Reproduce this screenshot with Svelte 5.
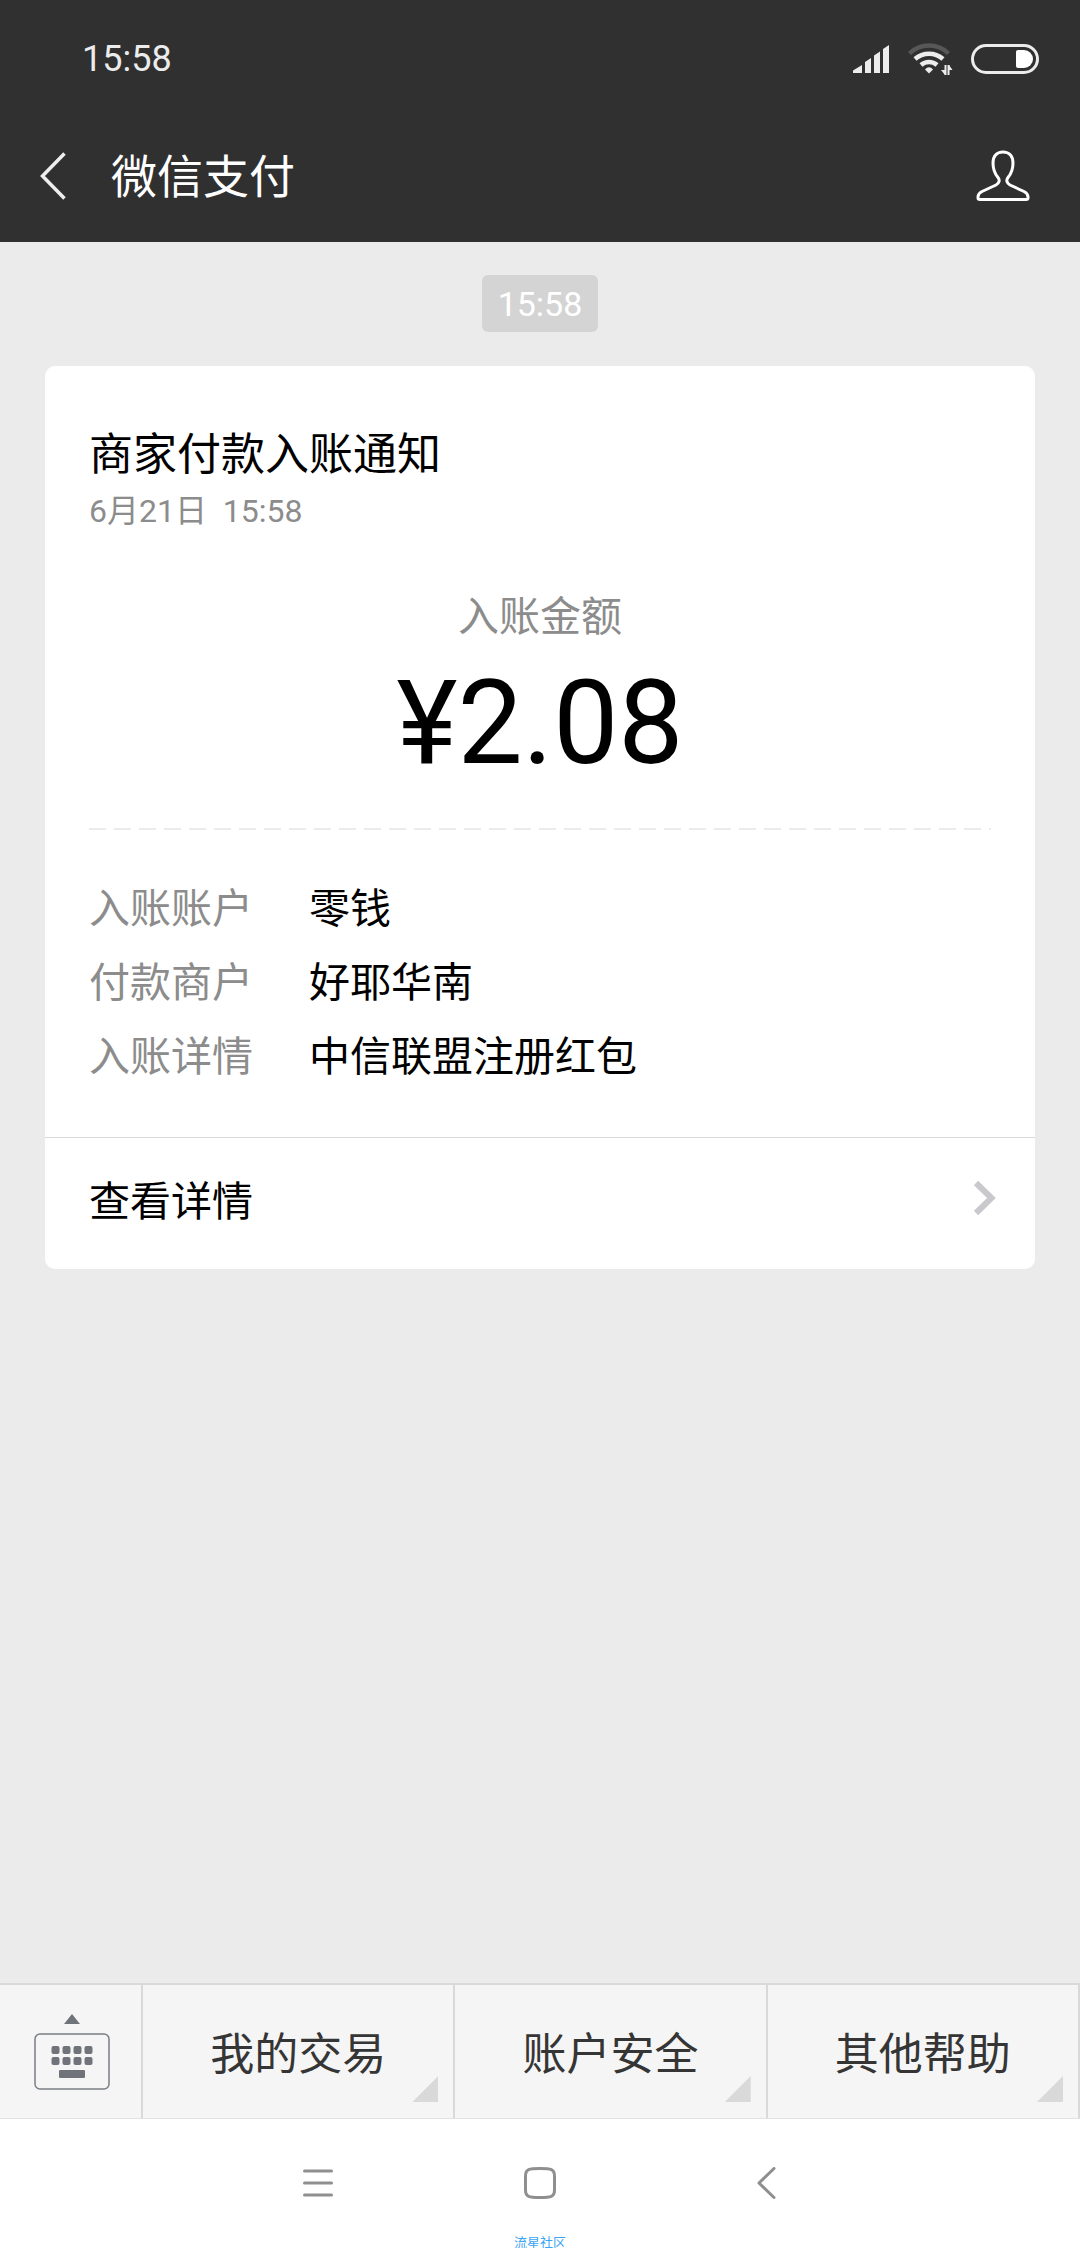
<script>
  const rows = [
    { label: '入账账户', value: '零钱' },
    { label: '付款商户', value: '好耶华南' },
    { label: '入账详情', value: '中信联盟注册红包' }
  ];
  const menus = ['我的交易', '账户安全', '其他帮助'];
  const keyColumns = [0, 11, 22, 33];
  const keyRows = [0, 11];
</script>

<div class="screen">
  <header class="top">
    <div class="status">
      <span class="clock num">15:58</span>
      <div class="indicators">
        <svg width="36" height="28" viewBox="0 0 36 28" fill="#ececec" aria-hidden="true">
          <path d="M0 28V25.500L9 20V28Z" />
          <path d="M12 28V17L18 13V28Z" />
          <path d="M21 28V10.500L27 6.500V28Z" />
          <path d="M30 28V4L36 0V28Z" />
        </svg>
        <svg class="wifi" width="44" height="32" viewBox="0 0 44 32" fill="none" stroke-width="4.500" aria-hidden="true">
          <path d="M1.500 10.500A28 28 0 0 1 40.500 10.500" stroke="#575757" />
          <path d="M7 16A21 21 0 0 1 35 16" stroke="#ececec" />
          <path d="M13 22A12 12 0 0 1 29 22" stroke="#ececec" />
          <path d="M21 30.500L17 26.500Q21 22 25 26.500Z" fill="#ececec" />
          <path d="M37.500 22V32M40.500 22V32" stroke="#ececec" stroke-width="2" />
          <path d="M33 27H37V32ZM44.500 27H41V22Z" fill="#ececec" />
        </svg>
        <svg width="68" height="30" viewBox="0 0 68 30" aria-hidden="true">
          <rect x="1.500" y="1.500" width="65" height="27" rx="13.500" fill="none" stroke="#ececec" stroke-width="3" />
          <path d="M47 6H53A9 9 0 0 1 53 24H47Q45 24 45 22V8Q45 6 47 6Z" fill="#fff" />
        </svg>
      </div>
    </div>
    <div class="titlebar">
      <button class="icon back" aria-label="返回">
        <svg width="27" height="48" viewBox="0 0 27 48" fill="none" stroke="#eee" stroke-width="3.500">
          <path d="M24.500 1.500L2.500 24L24.500 46.500" />
        </svg>
      </button>
      <h1>微信支付</h1>
      <button class="icon profile" aria-label="资料">
        <svg width="54" height="52" viewBox="0 0 54 52" fill="none" stroke="#fff" stroke-width="3" stroke-linejoin="round">
          <path d="M27 2C20.500 2 17 6.500 17 13C17 20 19 24 22 27.500C24 30 23.500 33 20 35L6 41.500C3 43 2 44.500 2 47V48Q2 49.500 4 49.500H50Q52 49.500 52 48V47C52 44.500 51 43 48 41.500L34 35C30.500 33 30 30 32 27.500C35 24 37 20 37 13C37 6.500 33.500 2 27 2Z" />
        </svg>
      </button>
    </div>
  </header>

  <main>
    <time class="chip num">15:58</time>
    <article class="card">
      <div class="body">
        <h2>商家付款入账通知</h2>
        <p class="date num">6月21日  15:58</p>
        <p class="caption">入账金额</p>
        <p class="amount num">¥2.08</p>
        <svg class="dashes" height="2" aria-hidden="true">
          <line x1="0" y1="1" x2="100%" y2="1" />
        </svg>
        <dl>
          {#each rows as row}
            <div class="row">
              <dt>{row.label}</dt>
              <dd>{row.value}</dd>
            </div>
          {/each}
        </dl>
      </div>
      <a class="more" href="#detail">
        <span>查看详情</span>
        <svg width="24" height="36" viewBox="0 0 24 36" fill="none" stroke="#c8c8cd" stroke-width="6" aria-hidden="true">
          <path d="M3 3L18.500 18L3 33" />
        </svg>
      </a>
    </article>
  </main>

  <footer>
    <div class="menubar">
      <button class="keyboard" aria-label="切换键盘">
        <svg width="76" height="78" viewBox="0 0 76 78" aria-hidden="true">
          <path d="M38 1L46 11H30Z" fill="#70747a" />
          <rect x="1" y="21" width="74" height="55" rx="5" fill="none" stroke="#7a7e83" stroke-width="1.500" />
          {#each keyRows as y}
            {#each keyColumns as x}
              <rect x={x + 17.5} y={y + 33} width="8" height="8" rx="2" fill="#70747a" />
            {/each}
          {/each}
          <rect x="25" y="57" width="26" height="8" rx="1" fill="#70747a" />
        </svg>
      </button>
      {#each menus as menu}
        <button class="menu">{menu}</button>
      {/each}
    </div>
    <nav>
      <button class="icon" aria-label="最近任务">
        <svg width="32" height="32" viewBox="0 0 32 32" stroke="#8f8f8f" stroke-width="3" stroke-linecap="round">
          <path d="M2.500 4H29.500M2.500 16H29.500M2.500 28H29.500" />
        </svg>
      </button>
      <button class="icon" aria-label="主屏幕">
        <svg width="32" height="32" viewBox="0 0 32 32" fill="none" stroke="#8f8f8f" stroke-width="3">
          <path d="M16 1.500C27 1.500 30.500 2 30.500 9V23C30.500 30 27 30.500 16 30.500C5 30.500 1.500 30 1.500 23V9C1.500 2 5 1.500 16 1.500Z" />
        </svg>
      </button>
      <button class="icon" aria-label="返回上级">
        <svg width="32" height="32" viewBox="0 0 32 32" fill="none" stroke="#8f8f8f" stroke-width="3" stroke-linecap="round" stroke-linejoin="round">
          <path d="M28 1.500L13 16L28 30.500" />
        </svg>
      </button>
    </nav>
    <p class="mark">流星社区</p>
  </footer>
</div>

<style>
  :global(body) {
    background: #ebebeb;
  }
  .screen {
    display: flex;
    flex-direction: column;
    min-height: 100vh;
    background: #ebebeb;
    color: #000;
    font-family: 'Noto Sans CJK SC', sans-serif;
    font-weight: 400;
  }
  .num {
    font-family: Roboto, 'Noto Sans CJK SC', sans-serif;
  }
  h1,
  h2,
  p,
  dl,
  dd {
    margin: 0;
    font-weight: inherit;
  }
  button {
    margin: 0;
    padding: 0;
    border: 0;
    background: none;
    color: inherit;
    font: inherit;
  }
  svg {
    display: block;
  }
  .top {
    background: #303030;
    color: #fff;
  }
  .status {
    display: flex;
    justify-content: space-between;
    align-items: center;
    height: 112px;
    padding: 5px 41px 0 82px;
    box-sizing: border-box;
  }
  .clock {
    color: #ececec;
    font-size: 36px;
  }
  .indicators {
    display: flex;
    align-items: center;
    gap: 19px;
  }
  .wifi {
    overflow: visible;
  }
  .titlebar {
    display: flex;
    align-items: center;
    height: 130px;
    padding: 0 50px 2px 40px;
    box-sizing: border-box;
  }
  h1 {
    flex: 1;
    padding: 0 0 6px 44px;
    font-size: 46px;
    line-height: 64px;
  }
  main {
    flex: 1;
    display: flex;
    flex-direction: column;
    align-items: center;
    padding: 33px 45px;
  }
  .chip {
    padding: 2px 16px 0;
    border-radius: 6px;
    background: #d4d4d4;
    color: #fff;
    font-size: 34px;
    line-height: 55px;
  }
  .card {
    align-self: stretch;
    margin-top: 34px;
    border-radius: 10px;
    background: #fff;
  }
  .body {
    padding: 53px 44px 47px;
  }
  h2 {
    font-size: 44px;
    line-height: 64px;
  }
  .date {
    color: #8c8c8c;
    font-size: 32px;
    line-height: 56px;
    white-space: pre;
  }
  .caption {
    margin-top: 44px;
    color: #8c8c8c;
    font-size: 41px;
    line-height: 60px;
    text-align: center;
  }
  .amount {
    margin-top: 12px;
    font-size: 116px;
    line-height: 136px;
    text-align: center;
  }
  .dashes {
    width: 100%;
    margin: 37px 0 38px;
  }
  .dashes line {
    stroke: #ebebeb;
    stroke-width: 2;
    stroke-dasharray: 17 8;
  }
  .row {
    display: flex;
    gap: 56px;
    font-size: 41px;
    line-height: 74px;
  }
  dt {
    color: #8c8c8c;
  }
  .more {
    display: flex;
    justify-content: space-between;
    align-items: center;
    height: 132px;
    padding: 0 38px 12px 44px;
    box-sizing: border-box;
    border-top: 1px solid #d9d9d9;
    color: inherit;
    font-size: 41px;
    text-decoration: none;
  }
  footer {
    background: #fff;
  }
  .menubar {
    display: flex;
    height: 136px;
    box-sizing: border-box;
    border-top: 2px solid #d9d9d9;
    border-bottom: 1px solid #e2e2e2;
    background: #f5f5f5;
    color: #353535;
  }
  .menubar button {
    border-right: 2px solid #d9d9d9;
  }
  .keyboard {
    display: grid;
    place-items: center;
    width: 143px;
    padding-left: 2px;
  }
  .menu {
    position: relative;
    flex: 1;
    padding-bottom: 2px;
    font-size: 44px;
  }
  .menu::after {
    content: '';
    position: absolute;
    right: 15px;
    bottom: 16px;
    width: 26px;
    height: 26px;
    background: #d9d9d9;
    clip-path: polygon(100% 0, 100% 100%, 0 100%);
  }
  nav {
    display: flex;
    justify-content: center;
    gap: 190px;
    padding: 48px 0 36px;
  }
  .mark {
    color: #3ba4f4;
    font-size: 13px;
    line-height: 13px;
    text-align: center;
  }
</style>
